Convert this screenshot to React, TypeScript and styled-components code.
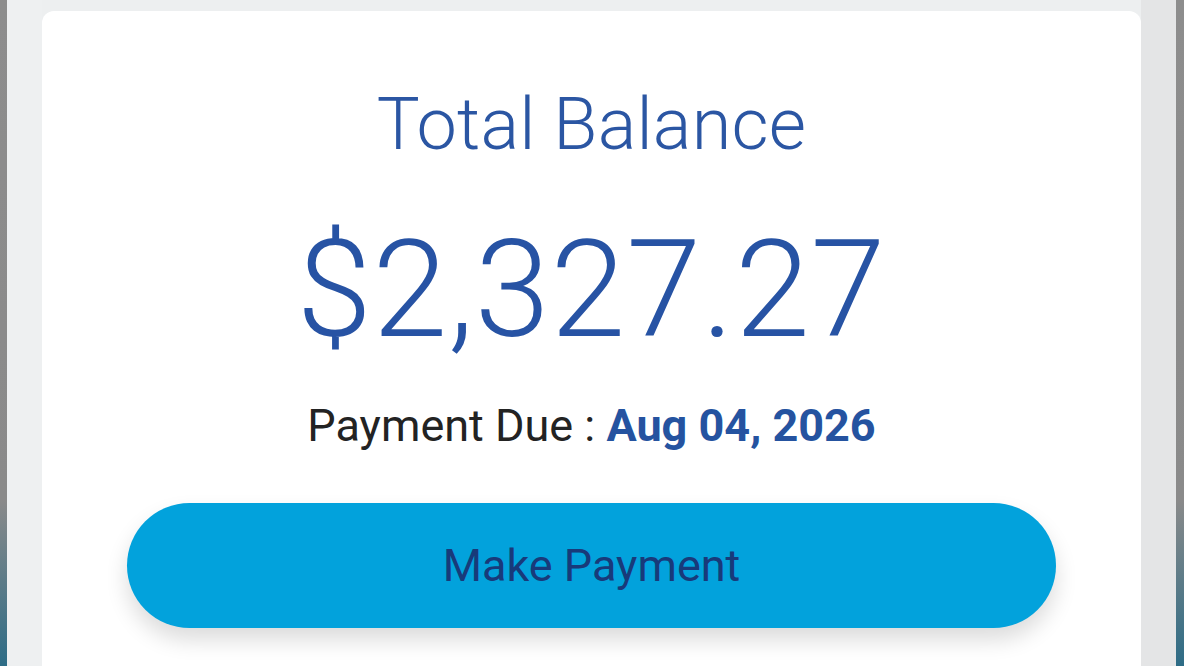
import styled, { createGlobalStyle } from 'styled-components'

const GlobalStyle = createGlobalStyle`
  html, body {
    margin: 0;
    padding: 0;
    height: 100%;
    overflow: hidden;
  }
  body {
    font-family: Roboto, 'Liberation Sans', sans-serif;
    background: #eceeef;
  }
`

const Frame = styled.div`
  display: flex;
  width: 1184px;
  height: 666px;
  overflow: hidden;
`

const Edge = styled.div<{ $w: number }>`
  flex: 0 0 ${(p) => p.$w}px;
  background: linear-gradient(180deg, #8d8d8d 0%, #8a8a8a 75%, #2d6c86 100%);
`

const Gutter = styled.div<{ $tone: string }>`
  flex: 0 0 35px;
  background: ${(p) => p.$tone};
`

const Stage = styled.div`
  flex: 1;
  display: flex;
  flex-direction: column;
  padding-top: 11px;
  background: #edeff0;
`

const Card = styled.div`
  flex: 1;
  background: #ffffff;
  border-radius: 12px 12px 0 0;
  display: flex;
  flex-direction: column;
  align-items: center;
  padding: 72px 85px 0;
`

const Title = styled.h1`
  margin: 0;
  font-weight: 300;
  font-size: 72px;
  line-height: 84px;
  color: #2b56a3;
  letter-spacing: 0.2px;
`

const Amount = styled.div`
  margin-top: 48px;
  font-weight: 300;
  font-size: 135px;
  line-height: 150px;
  letter-spacing: 0.8px;
  color: #2753a4;
`

const DueLine = styled.div`
  margin-top: 34px;
  font-size: 45px;
  line-height: 54px;
  color: #232323;
`

const DueDate = styled.span`
  font-weight: 700;
  color: #2553a0;
`

const PayButton = styled.button`
  margin-top: 50px;
  width: 100%;
  height: 125px;
  border: none;
  border-radius: 63px;
  background: #02a2dc;
  color: #183a7a;
  font-family: Roboto, 'Liberation Sans', sans-serif;
  font-size: 45px;
  box-shadow: 0 12px 22px rgba(0, 0, 0, 0.14);
  cursor: pointer;
`

export default function App() {
  return (
    <>
      <GlobalStyle />
      <Frame>
        <Edge $w={7} />
        <Gutter $tone="#eef0f1" />
        <Stage>
          <Card>
            <Title>Total Balance</Title>
            <Amount>$2,327.27</Amount>
            <DueLine>
              Payment Due : <DueDate>Aug 04, 2026</DueDate>
            </DueLine>
            <PayButton>Make Payment</PayButton>
          </Card>
        </Stage>
        <Gutter $tone="#e4e5e6" />
        <Edge $w={8} />
      </Frame>
    </>
  )
}
